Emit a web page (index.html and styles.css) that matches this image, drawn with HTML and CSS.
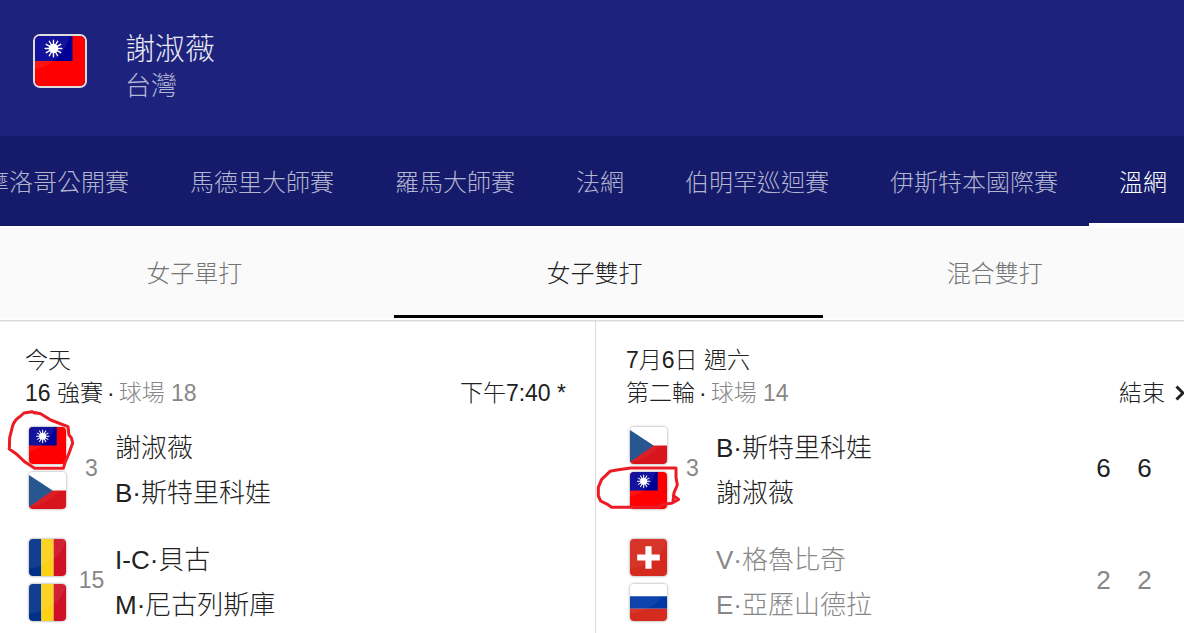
FILE: index.html
```html
<!DOCTYPE html>
<html lang="zh-Hant">
<head>
<meta charset="utf-8">
<meta name="viewport" content="width=device-width, initial-scale=1">
<title>謝淑薇</title>
<link rel="stylesheet" href="styles.css">
</head>
<body>
<svg class="defs" aria-hidden="true">
  <symbol id="tw" viewBox="0 0 36 36">
    <path fill="#f00" d="M0 0h36v36H0z"/>
    <path fill="#000095" d="M0 0h27v18H0z"/>
    <path fill="#fff" fill-opacity=".07" d="M0 0h25C21 14 12 21 0 24z"/>
    <path stroke="#fff" stroke-width="1" stroke-linecap="round" d="M13.3 3v12M7.3 9h12M10.3 3.8l6 10.4M16.3 3.8l-6 10.4M8.1 6l10.4 6M8.1 12l10.4-6"/>
    <circle cx="13.3" cy="9" r="3.4" fill="#fff"/>
  </symbol>
  <symbol id="cz" viewBox="0 0 36 36">
    <path fill="#fff" d="M0 0h36v18H0z"/>
    <path fill="#d8141c" d="M0 18h36v18H0z"/>
    <path fill="#1d4f8a" d="M0 3l23 15L0 34z"/>
    <path fill="#fff" fill-opacity=".05" d="M0 0h36C33 20 20 31 0 34z"/>
  </symbol>
  <symbol id="ro" viewBox="0 0 36 36">
    <path fill="#003087" d="M0 0h12v36H0z"/>
    <path fill="#fcd116" d="M12 0h12v36H12z"/>
    <path fill="#ce1126" d="M24 0h12v36H24z"/>
    <path fill="#fff" fill-opacity=".07" d="M0 0h36C33 16 20 26 0 29z"/>
  </symbol>
  <symbol id="ch" viewBox="0 0 36 36">
    <path fill="#d52b1e" d="M0 0h36v36H0z"/>
    <path fill="#fff" fill-opacity=".05" d="M0 0h36C33 16 20 26 0 29z"/>
    <path fill="#fff" d="M15 7h6v8h8v6h-8v8h-6v-8H7v-6h8z"/>
  </symbol>
  <symbol id="ru" viewBox="0 0 36 36">
    <path fill="#fff" d="M0 0h36v12H0z"/>
    <path fill="#0039a6" d="M0 12h36v12H0z"/>
    <path fill="#d52b1e" d="M0 24h36v12H0z"/>
    <path fill="#fff" fill-opacity=".05" d="M0 0h36C33 16 20 26 0 29z"/>
  </symbol>
</svg>

<header class="hero">
  <svg class="flag flag-large" role="img" aria-label="台灣"><use href="#tw"/></svg>
  <div>
    <h1 class="hero-name">謝淑薇</h1>
    <p class="hero-country">台灣</p>
  </div>
</header>

<nav class="events">
  <div class="events-track">
    <a class="event" href="#">摩洛哥公開賽</a>
    <a class="event" href="#">馬德里大師賽</a>
    <a class="event" href="#">羅馬大師賽</a>
    <a class="event" href="#">法網</a>
    <a class="event" href="#">伯明罕巡迴賽</a>
    <a class="event" href="#">伊斯特本國際賽</a>
    <a class="event is-active" href="#" aria-current="page">溫網</a>
  </div>
</nav>

<div class="draws">
  <div class="draws-track" role="tablist">
    <button class="draw" role="tab">女子單打</button>
    <button class="draw is-active" role="tab" aria-selected="true">女子雙打</button>
    <button class="draw" role="tab">混合雙打</button>
  </div>
</div>

<main class="matches">
  <section class="match">
    <p class="line">今天</p>
    <div class="line info">
      <p>16 強賽<span class="dot">·</span><span class="muted">球場 18</span></p>
      <p class="status">下午7:40 *</p>
    </div>
    <div class="team">
      <div class="flags">
        <svg class="flag" role="img" aria-label="台灣"><use href="#tw"/></svg>
        <svg class="flag" role="img" aria-label="捷克"><use href="#cz"/></svg>
      </div>
      <span class="seed">3</span>
      <div class="names"><p>謝淑薇</p><p>B·斯特里科娃</p></div>
    </div>
    <div class="team">
      <div class="flags">
        <svg class="flag" role="img" aria-label="羅馬尼亞"><use href="#ro"/></svg>
        <svg class="flag" role="img" aria-label="羅馬尼亞"><use href="#ro"/></svg>
      </div>
      <span class="seed">15</span>
      <div class="names"><p>I-C·貝古</p><p>M·尼古列斯庫</p></div>
    </div>
    <svg class="mark mark-first" viewBox="0 0 330 330" aria-hidden="true">
      <path d="M104 24L96 20 72 24 62 33C45 44 38 54 36 70L29 98 28 132 48 146 76 172 104 190H190L196 170 207 145 218 114 214 98 207 90 204 65 152 45 122 26 96 21"/>
    </svg>
  </section>

  <section class="match">
    <p class="line">7月6日 週六</p>
    <div class="line info">
      <p>第二輪<span class="dot">·</span><span class="muted">球場 14</span></p>
      <p class="status">結束
        <svg class="chevron" viewBox="0 0 10 16" aria-hidden="true"><path d="M1.5 1.5L8 8l-6.500 6.500"/></svg>
      </p>
    </div>
    <div class="team">
      <div class="flags">
        <svg class="flag" role="img" aria-label="捷克"><use href="#cz"/></svg>
        <svg class="flag" role="img" aria-label="台灣"><use href="#tw"/></svg>
      </div>
      <span class="seed">3</span>
      <div class="names"><p>B·斯特里科娃</p><p>謝淑薇</p></div>
      <div class="scores"><span>6</span><span>6</span></div>
    </div>
    <div class="team lost">
      <div class="flags">
        <svg class="flag" role="img" aria-label="瑞士"><use href="#ch"/></svg>
        <svg class="flag" role="img" aria-label="俄羅斯"><use href="#ru"/></svg>
      </div>
      <span class="seed"></span>
      <div class="names"><p>V·格魯比奇</p><p>E·亞歷山德拉</p></div>
      <div class="scores"><span>2</span><span>2</span></div>
    </div>
    <svg class="mark mark-second" viewBox="18 0 312 180" aria-hidden="true">
      <path d="M250 106L266 118 244 130 226 132 200 142H65L54 134 32 123 25 108V82L35 58 60 34 80 30 122 24H258V52L262 75 252 98 249 125"/>
    </svg>
  </section>
</main>
</body>
</html>
```

FILE: styles.css
```css
* { box-sizing: border-box; }

body {
  display: flex;
  flex-direction: column;
  min-height: 100vh;
  margin: 0;
  background: #fff;
  color: #212121;
  font-family: "Liberation Sans", "Noto Sans CJK TC", sans-serif;
  font-weight: 300;
  overflow-x: hidden;
}

h1, p { margin: 0; font-weight: inherit; }

.defs { position: absolute; width: 0; height: 0; }

.flag {
  display: block;
  width: 37px;
  height: 37px;
  border-radius: 4px;
  box-shadow: 0 0 2px 1px #ccc;
}

.flag-large {
  width: 54px;
  height: 54px;
  border: 2px solid #ddd;
  border-radius: 7px;
  box-shadow: none;
}

.hero {
  display: flex;
  align-items: flex-start;
  gap: 38px;
  padding: 30px 33px 31px;
  background: #1d227d;
}

.hero .flag { margin-top: 4px; }

.hero-name {
  color: #e8e8f2;
  font-size: 30px;
  line-height: 38px;
}

.hero-country {
  color: #b4b6d6;
  font-size: 26px;
  line-height: 37px;
}

.events {
  overflow: hidden;
  background: #151b6a;
}

.events-track {
  display: flex;
  gap: 1px;
  margin-left: -45px;
}

.event {
  flex: none;
  padding: 6px 30px 0;
  border-bottom: 3px solid transparent;
  color: #b3b5d0;
  font-size: 24px;
  line-height: 81px;
  text-decoration: none;
}

.event.is-active {
  border-color: #fff;
  color: #fff;
}

.draws {
  overflow: hidden;
  border-top: 2px solid #fff;
  border-bottom: 2px solid #fff;
  background: #fafafa;
}

.draws-track {
  display: grid;
  grid-template-columns: repeat(3, 1fr);
  margin: 0 -11px 0 -6px;
}

.draw {
  position: relative;
  padding: 4px 0 3px;
  border: 0;
  background: none;
  color: #757575;
  font: inherit;
  font-size: 24px;
  line-height: 83px;
}

.draw.is-active { color: #212121; }

.draw.is-active::after {
  content: "";
  position: absolute;
  bottom: 0;
  left: 0;
  width: 107%;
  height: 3px;
  background: #000;
}

.matches {
  flex: 1;
  display: grid;
  grid-template-columns: 596fr 588fr;
  border-top: 1px solid #dadada;
  box-shadow: inset 0 1px #efefef;
}

.match {
  position: relative;
  min-width: 0;
  padding: 23px 29px 0 25px;
  overflow: hidden;
}

.match:first-child { border-right: 1px solid #dadada; }

.match:last-child {
  padding-left: 30px;
  padding-right: 19px;
}

.line {
  font-size: 23px;
  line-height: 33px;
  white-space: nowrap;
}

.info {
  display: flex;
  justify-content: space-between;
}

.dot { padding: 0 4px; }

.muted, .seed, .lost { color: #878787; }

.status { position: relative; }

.chevron {
  position: absolute;
  top: 8px;
  left: calc(100% + 10px);
  width: 10px;
  height: 16px;
  fill: none;
  stroke: #212121;
  stroke-width: 3;
}

.team {
  display: grid;
  grid-template-columns: 43px 47px 1fr auto;
  align-items: center;
  margin-top: 10px;
  font-size: 26px;
  line-height: 45px;
}

.team + .team { margin-top: 16px; }

.flags {
  display: grid;
  gap: 8px;
  padding-left: 4px;
}

.names { padding-top: 6px; }

.seed {
  font-size: 23px;
  text-align: center;
}

.scores {
  display: grid;
  grid-template-columns: 41px 41px;
  text-align: center;
}

.mark {
  position: absolute;
  fill: none;
  stroke: #ed1c24;
  stroke-width: 9;
  stroke-linejoin: round;
  stroke-linecap: round;
}

.mark-first {
  top: 84px;
  left: 0;
  width: 110px;
  height: 110px;
}

.mark-second {
  top: 139px;
  left: 0;
  width: 104px;
  height: 60px;
}
```
